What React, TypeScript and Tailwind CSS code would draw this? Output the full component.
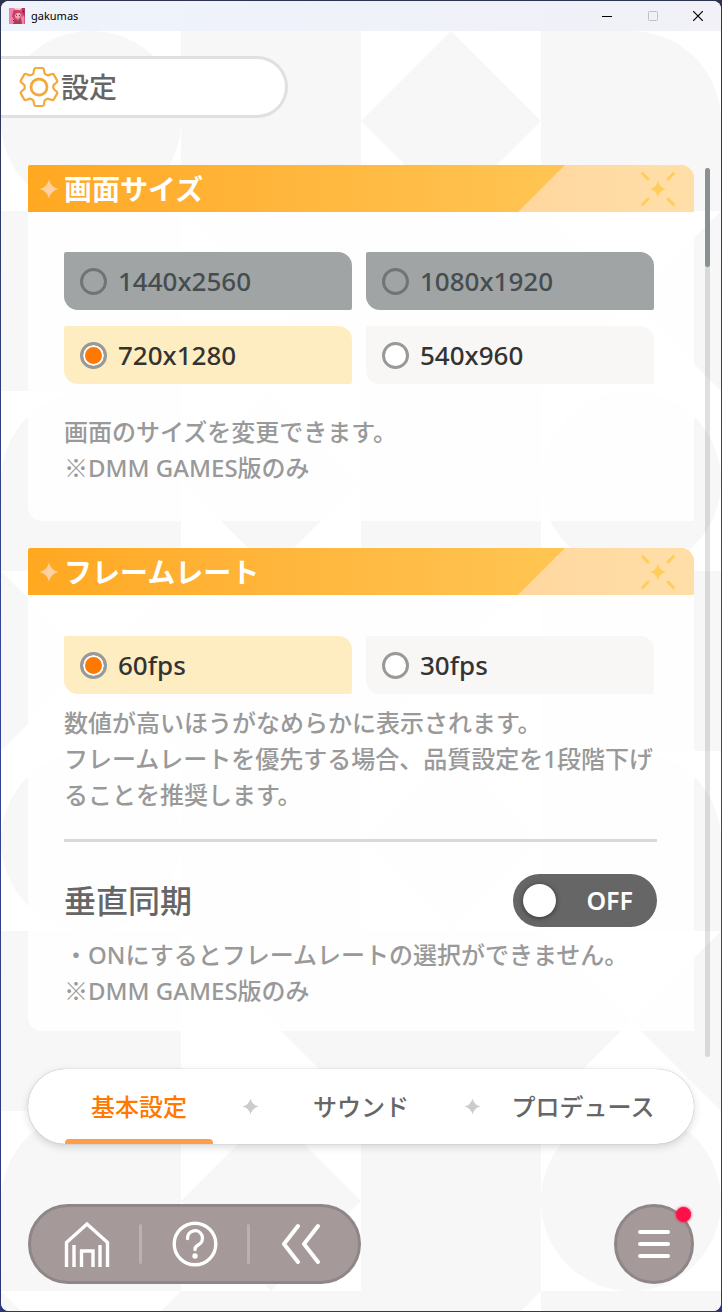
import { useState, type ReactNode } from "react";

const jp = "font-['Noto_Sans','Noto_Sans_CJK_JP',sans-serif]";

function Backdrop() {
  return (
    <svg className="absolute inset-0 h-full w-full" aria-hidden="true">
      <defs>
        <pattern id="tiles" width="720" height="720" patternUnits="userSpaceOnUse">
          <rect width="720" height="720" fill="#fff" />
          <g fill="#f7f7f7">
            <circle cx="90" cy="90" r="90" />
            <rect x="180" y="0" width="180" height="180" />
            <path d="M450 0L540 90L450 180L360 90Z" />
            <path d="M540 0H630A90 90 0 0 1 720 90V180H540Z" />

            <rect x="0" y="180" width="180" height="180" />
            <path d="M180 180H360V360Z" />
            <rect x="360" y="180" width="180" height="180" />
            <path d="M540 180L630 270L540 360ZM720 180L630 270L720 360Z" />

            <path d="M0 540V450A90 90 0 0 1 90 360H180V540Z" />
            <path d="M270 360L360 450L270 540L180 450Z" />
            <rect x="360" y="360" width="180" height="180" />
            <circle cx="630" cy="450" r="90" />

            <path d="M0 540L90 630L0 720ZM180 540L90 630L180 720Z" />
            <rect x="180" y="540" width="180" height="180" />
            <path d="M360 540H540L360 720Z" />
            <rect x="540" y="540" width="180" height="180" />
          </g>
        </pattern>
      </defs>
      <rect width="100%" height="100%" fill="url(#tiles)" />
    </svg>
  );
}

function AppIcon() {
  return (
    <svg width="16" height="16" viewBox="0 0 16 16" aria-hidden="true">
      <rect width="16" height="16" fill="#d9577f" />
      <path d="M0 0H5V16H0Z" fill="#f37fb0" />
      <path d="M5 0H13L11 2H6Z" fill="#f9c9d6" />
      <path d="M13 0H16V9L13 5Z" fill="#b5355a" />
      <path d="M6 6L9 4L12 6L11 9L9 11L6 9Z" fill="#f0a9b4" />
      <path d="M4 3Q8 0 13 4L12 6Q9 3 6 7L6 12L3 9Z" fill="#c4456a" />
      <path d="M4 16L6 11L9 13L12 10L14 16Z" fill="#a83c58" />
      <path d="M12 9L15 8V16H13Z" fill="#e88aa5" />
      <rect x="7" y="7" width="1" height="1" fill="#8d3450" />
      <rect x="10" y="7" width="1" height="1" fill="#8d3450" />
      <rect x="14" y="3" width="1" height="1" fill="#4d1930" />
      <rect x="4" y="12" width="1" height="1" fill="#4d1930" />
    </svg>
  );
}

function gearPath() {
  const rot = (x: number, y: number, deg: number) => {
    const a = (deg * Math.PI) / 180;
    return `${(x * Math.cos(a) - y * Math.sin(a)).toFixed(2)} ${(x * Math.sin(a) + y * Math.cos(a)).toFixed(2)}`;
  };
  let d = "";
  for (let i = 0; i < 6; i++) {
    const a = i * 60;
    d += `${i === 0 ? "M" : "L"}${rot(-5.6, -13.6, a)}`;
    d += `L${rot(-4.8, -17.8, a)}Q${rot(-4.5, -19, a)} ${rot(-3.3, -19, a)}`;
    d += `L${rot(3.3, -19, a)}Q${rot(4.5, -19, a)} ${rot(4.8, -17.8, a)}`;
    d += `L${rot(5.6, -13.6, a)}`;
    d += `Q${rot(6.6, -12.2, a)} ${rot(-5.6, -13.6, a + 60)}`;
  }
  return d + "Z";
}

function Gear() {
  return (
    <svg width="40" height="42" viewBox="-20 -21 40 42" fill="none" stroke="#f5a93d" aria-hidden="true">
      <path d={gearPath()} strokeWidth="2.2" strokeLinejoin="round" />
      <circle r="8" strokeWidth="2.8" />
    </svg>
  );
}

const STAR = "M0 -9.5Q1.8 -1.8 9.5 0Q1.8 1.8 0 9.5Q-1.8 1.8 -9.5 0Q-1.8 -1.8 0 -9.5Z";

function Star({ className }: { className: string }) {
  return (
    <svg viewBox="-10 -10 20 20" className={`shrink-0 ${className}`} aria-hidden="true">
      <path d={STAR} fill="currentColor" />
    </svg>
  );
}

function Section({ title, children }: { title: string; children: ReactNode }) {
  return (
    <section className="rounded-tr-[14px] rounded-bl-[14px] bg-white/90">
      <div className="flex h-[47px] items-center overflow-hidden rounded-tl-[2px] rounded-tr-[14px] bg-linear-to-r from-[#ffa820] to-[#ffcc5c]">
        <Star className="ml-[11px] size-5 text-[#ffd0a0]" />
        <h2 className="ml-[5px] flex-1 text-[28px] leading-none font-bold text-white">{title}</h2>
        <svg width="177" height="48" viewBox="0 0 177 48" className="shrink-0" aria-hidden="true">
          <defs>
            <linearGradient id="ribbon">
              <stop offset="0" stopColor="#ffd79f" />
              <stop offset="1" stopColor="#ffdfa8" />
            </linearGradient>
          </defs>
          <path d="M48 0H177V48H0Z" fill="url(#ribbon)" />
          <g transform="translate(141 24)" stroke="#ffcd5c" strokeWidth="3" strokeLinecap="round">
            <path d="M0 -8Q1.6 -1.6 8 0Q1.6 1.6 0 8Q-1.6 1.6 -8 0Q-1.6 -1.6 0 -8Z" fill="#ffcd5c" stroke="none" />
            <path d="M-15.5 -15.5L-10 -10M15.5 -15.5L10 -10M-15.5 15.5L-10 10M15.5 15.5L10 10" />
          </g>
        </svg>
      </div>
      {children}
    </section>
  );
}

function Option({ name, label, checked, disabled }: { name: string; label: string; checked?: boolean; disabled?: boolean }) {
  return (
    <label
      className={
        "flex h-[58px] items-center gap-[11px] rounded-tl-[2px] rounded-tr-[14px] rounded-br-[2px] rounded-bl-[14px] pl-4 text-[26px] font-medium " +
        (disabled ? "bg-[#a0a4a4] text-[#454d50]" : "bg-[#f8f7f5] text-[#333] has-checked:bg-[#ffedc2]")
      }
    >
      <input
        type="radio"
        name={name}
        defaultChecked={checked}
        disabled={disabled}
        className="size-[27px] shrink-0 appearance-none rounded-full border-3 border-[#999] bg-white checked:bg-[#ff7800] checked:shadow-[inset_0_0_0_2px_#fff] disabled:border-[#6f7576] disabled:bg-transparent"
      />
      {label}
    </label>
  );
}

function Toggle() {
  const [on, setOn] = useState(false);
  return (
    <button
      type="button"
      role="switch"
      aria-checked={on}
      aria-labelledby="vsync"
      onClick={() => setOn(!on)}
      className={
        "flex h-[53px] w-36 items-center justify-between rounded-full pr-6 pl-[10px] text-[25px] font-semibold text-white " +
        (on ? "flex-row-reverse bg-[#ff9a48]" : "bg-[#666]")
      }
    >
      <span className="size-[33px] rounded-full bg-white shadow-[0_1px_5px_#333]" />
      {on ? "ON" : "OFF"}
    </button>
  );
}

const TABS = ["基本設定", "サウンド", "プロデュース"];

function Tabs() {
  const [active, setActive] = useState(0);
  return (
    <div
      role="tablist"
      className="mr-[27px] flex h-[75px] items-center justify-between overflow-hidden rounded-full bg-white px-[37px] shadow-[0_0_1px_#999,0_3px_9px_#00000026]"
    >
      {TABS.map((tab, i) => [
        i > 0 && <Star key={"star" + i} className="size-[17px] text-[#ccc]" />,
        <button
          key={tab}
          type="button"
          role="tab"
          aria-selected={i === active}
          onClick={() => setActive(i)}
          className={
            "relative flex h-full w-[148px] items-center justify-center text-2xl font-medium whitespace-nowrap " +
            (i === active ? "text-[#ff7800]" : "text-[#666]")
          }
        >
          {tab}
          {i === active && <span className="absolute inset-x-0 bottom-0 h-[5px] rounded-t bg-[#ff9d4a]" />}
        </button>,
      ])}
    </div>
  );
}

const navButton = "flex h-full w-[105px] items-center justify-center";

function BottomNav() {
  return (
    <nav className="mt-[60px] mr-[27px] flex items-center justify-between">
      <div className="flex h-20 items-center rounded-full border-3 border-[#8f8787] bg-[#a59999] pr-[6px] pl-[3px]">
        <button type="button" aria-label="ホーム" className={navButton}>
          <svg width="48" height="48" viewBox="0 0 48 48" fill="none" stroke="#fff" strokeWidth="3.4" aria-hidden="true">
            <path d="M3.5 47V22.5L24 4L44.5 22.5V47" />
            <path d="M11 25V47M37 25V47" />
            <path d="M18.5 47V31H30V47" />
          </svg>
        </button>
        <span className="h-10 w-[3px] rounded-full bg-[#bbb1b1]" />
        <button type="button" aria-label="ヘルプ" className={navButton}>
          <svg width="46" height="46" viewBox="0 0 46 46" fill="none" stroke="#fff" strokeWidth="3.4" strokeLinecap="round" aria-hidden="true">
            <circle cx="23" cy="23" r="20.8" />
            <path d="M15.5 17.5A7.5 7.5 0 1 1 26.5 23.8Q23 25.5 23 28.5" />
            <circle cx="23" cy="35" r="2.7" fill="#fff" stroke="none" />
          </svg>
        </button>
        <span className="h-10 w-[3px] rounded-full bg-[#bbb1b1]" />
        <button type="button" aria-label="戻る" className="flex h-full w-[102px] items-center justify-center">
          <svg width="40" height="44" viewBox="0 0 40 44" fill="none" stroke="#fff" strokeWidth="4" strokeLinecap="round" strokeLinejoin="round" aria-hidden="true">
            <path d="M17 4L3 22L17 40M37 4L23 22L37 40" />
          </svg>
        </button>
      </div>
      <button
        type="button"
        aria-label="メニュー"
        className="relative flex size-20 items-center justify-center rounded-full border-3 border-[#8f8787] bg-[#a59999]"
      >
        <svg width="32" height="30" viewBox="0 0 32 30" stroke="#fff" strokeWidth="4" strokeLinecap="round" aria-hidden="true">
          <path d="M2 3H30M2 15H30M2 27H30" />
        </svg>
        <span className="absolute top-0 right-0 size-[15px] rounded-full bg-[#ff1048] shadow-[0_0_3px_#ff1048]" />
      </button>
    </nav>
  );
}

function DmmOnly() {
  return (
    <>
      <span className="font-['Noto_Sans_CJK_JP',sans-serif] leading-none">※</span>DMM GAMES版のみ
    </>
  );
}

const note = "text-2xl leading-9 font-medium text-[#999]";

export default function App() {
  return (
    <div className={`flex min-h-screen flex-col bg-linear-to-b from-[#2b3350] via-[#34469c] to-[#2c3578] p-px ${jp}`}>
      <div className="flex flex-1 flex-col overflow-hidden rounded-lg bg-white">
        <header className="flex h-[30px] items-center bg-linear-to-r from-[#eef3fc] to-[#f1f1f7] pl-2">
          <AppIcon />
          <span className="ml-[6px] flex-1 text-[11px] text-black">gakumas</span>
          <button type="button" aria-label="最小化" className="flex h-full w-[46px] items-center justify-center">
            <svg width="10" height="10" aria-hidden="true">
              <path d="M0 5H10" stroke="#000" shapeRendering="crispEdges" />
            </svg>
          </button>
          <button type="button" aria-label="最大化" disabled className="flex h-full w-[45px] items-center justify-center">
            <svg width="10" height="10" aria-hidden="true">
              <rect x=".5" y=".5" width="9" height="9" rx="1" fill="none" stroke="#bfc0c6" />
            </svg>
          </button>
          <button type="button" aria-label="閉じる" className="flex h-full w-[46px] items-center justify-center">
            <svg width="10" height="10" aria-hidden="true">
              <path d="M0 0L10 10M10 0L0 10" stroke="#000" strokeWidth="1.2" />
            </svg>
          </button>
        </header>

        <main className="relative flex-1 pt-[25px] pb-[27px]">
          <Backdrop />
          <div className="relative">
            <div className="flex h-[62px] w-[287px] items-center rounded-r-full border-3 border-l-0 border-[#e0e0e0] bg-white pl-[18px]">
              <Gear />
              <h1 className="ml-[2px] text-[28px] leading-none font-medium text-[#666]">設定</h1>
            </div>

            <div className="pl-[27px]">
              <div className="mt-[47px] flex gap-[11px] pr-[11px]">
                <div className="flex min-w-0 flex-1 flex-col gap-[27px] pb-[26px]">
                  <Section title="画面サイズ">
                    <div className="pt-10 pr-[37px] pb-[35px] pl-9">
                      <div role="radiogroup" aria-label="画面サイズ" className="grid grid-cols-2 gap-x-[14px] gap-y-4 pr-[3px]">
                        <Option name="size" label="1440x2560" disabled />
                        <Option name="size" label="1080x1920" disabled />
                        <Option name="size" label="720x1280" checked />
                        <Option name="size" label="540x960" />
                      </div>
                      <p className={`mt-[30px] ${note}`}>
                        画面のサイズを変更できます。
                        <br />
                        <DmmOnly />
                      </p>
                    </div>
                  </Section>

                  <Section title="フレームレート">
                    <div className="pt-[41px] pr-[37px] pb-[22px] pl-9">
                      <div role="radiogroup" aria-label="フレームレート" className="grid grid-cols-2 gap-x-[14px] pr-[3px]">
                        <Option name="fps" label="60fps" checked />
                        <Option name="fps" label="30fps" />
                      </div>
                      <p className={`mt-[11px] ${note}`}>
                        数値が高いほうがなめらかに表示されます。
                        <br />
                        フレームレートを優先する場合、品質設定を1段階下げることを推奨します。
                      </p>
                      <hr className="mt-[26px] border-t-3 border-[#d9d9d9]" />
                      <div className="mt-8 flex items-center justify-between">
                        <h3 id="vsync" className="text-[32px] leading-none font-medium text-[#666]">
                          垂直同期
                        </h3>
                        <Toggle />
                      </div>
                      <p className={`mt-[10px] ${note}`}>
                        ・ONにするとフレームレートの選択ができません。
                        <br />
                        <DmmOnly />
                      </p>
                    </div>
                  </Section>
                </div>
                <div className="mt-[3px] w-[5px] shrink-0 rounded-full bg-black/12" aria-hidden="true">
                  <div className="h-[99px] rounded-full bg-[#899192]" />
                </div>
              </div>

              <div className="pt-3">
                <Tabs />
              </div>
              <BottomNav />
            </div>
          </div>
        </main>
      </div>
    </div>
  );
}
